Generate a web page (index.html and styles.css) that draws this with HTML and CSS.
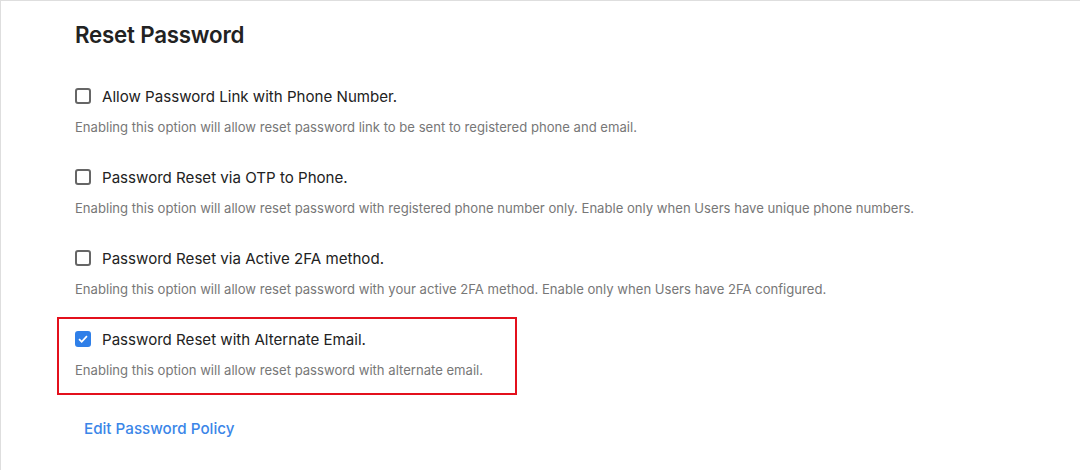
FILE: index.html
```html
<!DOCTYPE html>
<html lang="en">
<head>
  <meta charset="UTF-8">
  <meta name="viewport" content="width=device-width, initial-scale=1.0">
  <title>Reset Password</title>
  <link rel="stylesheet" href="styles.css">
</head>
<body>
  <div class="card">
    <h2>Reset Password</h2>

    <!-- Reset options -->
    <div class="option">
      <label class="option-label">
        <input type="checkbox" />
        <span>Allow Password Link with Phone Number.</span>
      </label>
      <p class="hint">Enabling this option will allow reset password link to be sent to registered phone and email.</p>
    </div>

    <div class="option">
      <label class="option-label">
        <input type="checkbox" />
        <span>Password Reset via OTP to Phone.</span>
      </label>
      <p class="hint">Enabling this option will allow reset password with registered phone number only. Enable only when Users have unique phone numbers.</p>
    </div>

    <div class="option">
      <label class="option-label">
        <input type="checkbox" />
        <span>Password Reset via Active 2FA method.</span>
      </label>
      <p class="hint">Enabling this option will allow reset password with your active 2FA method. Enable only when Users have 2FA configured.</p>
    </div>

    <div class="option highlighted">
      <label class="option-label">
        <input type="checkbox" checked />
        <span>Password Reset with Alternate Email.</span>
      </label>
      <p class="hint">Enabling this option will allow reset password with alternate email.</p>
    </div>

    <a href="#" class="policy-link">Edit Password Policy</a>
  </div>
</body>
</html>
```

FILE: styles.css
```css
body {
  font-family: Inter, "Noto Sans", Arial, sans-serif;
  margin: 0;
  padding: 0;
  background-color: #fff;
}
.card {
  width: 1080px;
  height: 470px;
  box-sizing: border-box;
  border-top: 1px solid #dedede;
  border-left: 1px solid #dedede;
  padding: 19px 0 0 74px;
}
h2 {
  margin: 0 0 36px;
  font-size: 22.3px;
  line-height: 30px;
  font-weight: 600;
  color: #222;
  letter-spacing: -0.2px;
}
.option {
  position: relative;
  height: 50px;
  margin-bottom: 31px;
}
.option-label {
  display: flex;
  align-items: center;
  gap: 11px;
  height: 20px;
  font-size: 15.1px;
  color: #222;
  cursor: pointer;
}
.option-label input {
  appearance: none;
  width: 16px;
  height: 16px;
  margin: 0;
  border: 2px solid #666;
  border-radius: 3px;
  box-sizing: border-box;
}
.option-label input:checked {
  border-color: #2f7fe8;
  background: #2f7fe8 url("data:image/svg+xml,%3Csvg xmlns='http://www.w3.org/2000/svg' viewBox='0 0 16 16'%3E%3Cpath d='M3.5 8.2l3 3 6-6.4' fill='none' stroke='%23fff' stroke-width='2'/%3E%3C/svg%3E") center / 14px no-repeat;
}
.hint {
  margin: 12px 0 0;
  font-size: 13.1px;
  line-height: 18px;
  color: #777;
}
.highlighted::after {
  content: "";
  position: absolute;
  left: -18px;
  top: -12px;
  width: 460px;
  height: 78px;
  box-sizing: border-box;
  border: 2px solid #e3101c;
  pointer-events: none;
}
.policy-link {
  display: inline-block;
  margin: 9px 0 0 9px;
  line-height: 20px;
  font-size: 15.2px;
  font-weight: 500;
  color: #3b86e8;
  text-decoration: none;
}
```
